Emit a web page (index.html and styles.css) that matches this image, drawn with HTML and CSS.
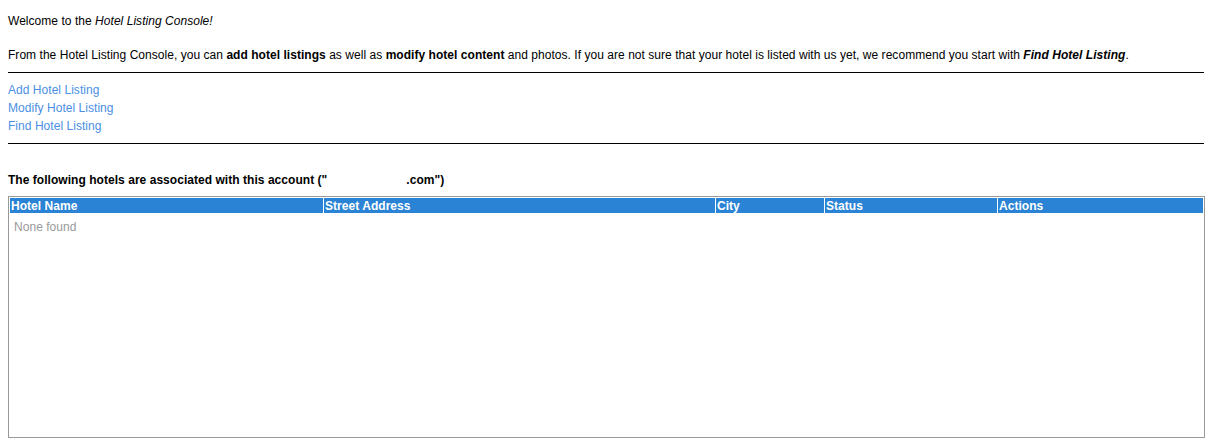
FILE: index.html
```html
<!DOCTYPE html>
<html>
<head>
<meta charset="utf-8">
<link rel="stylesheet" href="styles.css">
</head>
<body>
<div class="page">
  <p class="welcome">Welcome to the <em>Hotel Listing Console!</em></p>
  <p class="intro">From the Hotel Listing Console, you can <strong>add hotel listings</strong> as well as <strong>modify hotel content</strong> and photos. If you are not sure that your hotel is listed with us yet, we recommend you start with <strong><em>Find Hotel Listing</em></strong>.</p>
  <hr class="rule">
  <nav class="links">
    <a href="#">Add Hotel Listing</a>
    <a href="#">Modify Hotel Listing</a>
    <a href="#">Find Hotel Listing</a>
  </nav>
  <hr class="rule">
  <h2 class="assoc">The following hotels are associated with this account ("<span class="redacted"></span>.com")</h2>
  <div class="table-box">
    <table class="hotels">
      <colgroup>
        <col class="c1"><col class="c2"><col class="c3"><col class="c4"><col class="c5">
      </colgroup>
      <thead>
        <tr><th>Hotel Name</th><th>Street Address</th><th>City</th><th>Status</th><th>Actions</th></tr>
      </thead>
      <tbody>
        <tr><td class="empty" colspan="5">None found</td></tr>
      </tbody>
    </table>
  </div>
</div>
</body>
</html>
```

FILE: styles.css
```css
html, body {
  margin: 0;
  padding: 0;
  background: #fff;
}
body {
  font-family: "Liberation Sans", Arial, Helvetica, sans-serif;
  font-size: 12px;
  line-height: 18px;
  letter-spacing: 0.04px;
  color: #000;
}
.page {
  width: 1197px;
  padding: 12px 0 0 8px;
}
.welcome {
  margin: 0;
}
.intro {
  margin: 16px 0 0 0;
}
.rule {
  width: 1196px;
  margin: 0;
  border: 0;
  height: 1px;
  background: #000;
  box-sizing: border-box;
}
.intro + .rule {
  margin-top: 8px;
}
.links {
  display: flex;
  flex-direction: column;
  align-items: flex-start;
  margin-top: 8px;
  margin-bottom: 8px;
}
.links a {
  color: #4a8fe4;
  text-decoration: none;
}
.assoc {
  margin: 27px 0 0 0;
  font-size: 12px;
  line-height: 18px;
  font-weight: bold;
}
.redacted {
  display: inline-block;
  width: 79px;
}
.table-box {
  margin-top: 7px;
  width: 1197px;
  height: 242px;
  box-sizing: border-box;
  border: 1px solid #999;
}
.hotels {
  width: 100%;
  table-layout: fixed;
  border-collapse: separate;
  border-spacing: 1px;
}
.c1 { width: 313px; }
.c2 { width: 391px; }
.c3 { width: 108px; }
.c4 { width: 172px; }
.c5 { width: 205px; }
.hotels th {
  background: #2a83d4;
  color: #fff;
  font-weight: bold;
  text-align: left;
  padding: 1px 1px 0 1px;
  height: 15px;
  line-height: 14px;
  font-size: 12px;
  box-sizing: border-box;
}
.hotels td.empty {
  color: #999;
  padding: 5px 4px;
  line-height: 16px;
}
```
